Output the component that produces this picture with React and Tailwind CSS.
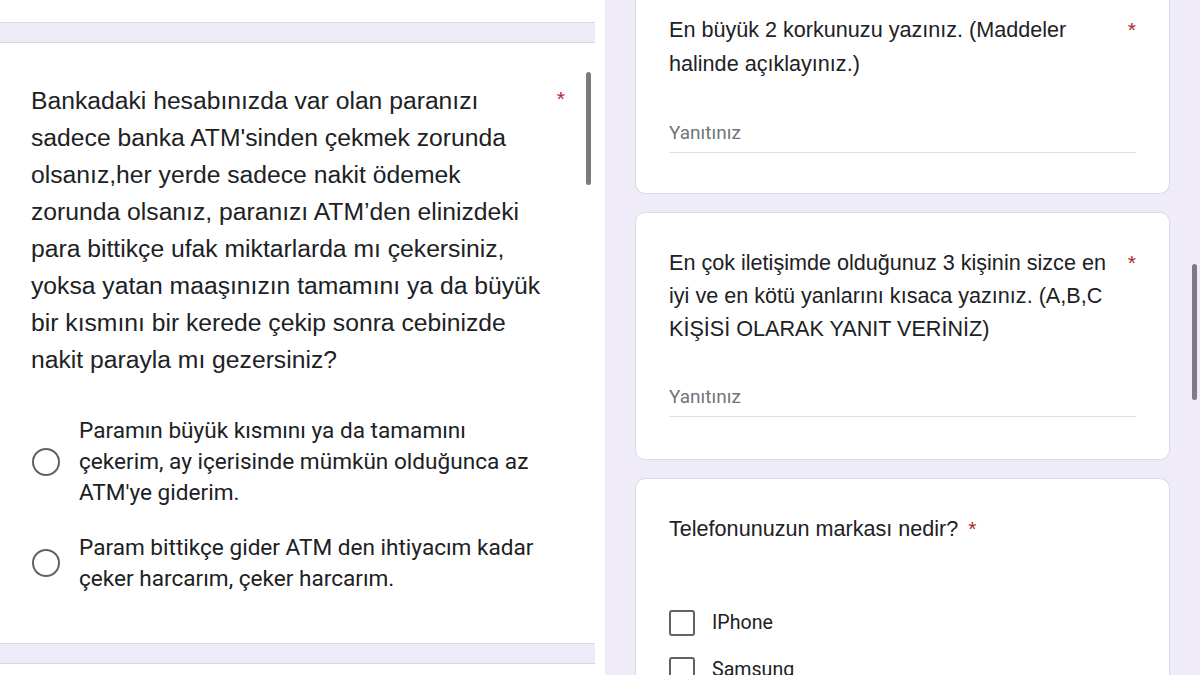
import React from "react";

const Q = "font-['Liberation_Sans',Arial,sans-serif]";
const R = "font-['Roboto','Liberation_Sans',sans-serif]";

function Star({ className = "" }) {
  return (
    <span className={`text-[#b3261e] text-[21px] leading-none ${Q} ${className}`}>*</span>
  );
}

function Radio() {
  return <div className="w-[28px] h-[28px] rounded-full border-[2.5px] border-[#5f6368] shrink-0" />;
}

function Checkbox() {
  return <div className="w-[26px] h-[26px] rounded-[3px] border-[2.5px] border-[#5f6368] shrink-0" />;
}

function LeftPanel() {
  const lines = [
    "Bankadaki hesabınızda var olan paranızı",
    "sadece banka ATM'sinden çekmek zorunda",
    "olsanız,her yerde sadece nakit ödemek",
    "zorunda olsanız, paranızı ATM’den elinizdeki",
    "para bittikçe ufak miktarlarda mı çekersiniz,",
    "yoksa yatan maaşınızın tamamını ya da büyük",
    "bir kısmını bir kerede çekip sonra cebinizde",
    "nakit parayla mı gezersiniz?",
  ];
  return (
    <div className="w-[605px] h-full bg-white relative overflow-hidden shrink-0">
      <div className="h-[22px] bg-white" />
      <div className="h-[21px] w-[595px] bg-[#efebf8] border-y border-[#d9d7de]" />
      <div className="h-[600px] w-[595px] bg-white pl-[31px] pr-[30px] pt-[39px] text-[#202124]">
        <div className="flex justify-between">
          <div className={`${Q} text-[24.7px] leading-[37px] whitespace-nowrap`}>
            {lines.map((l, i) => (
              <div key={i}>{l}</div>
            ))}
          </div>
          <Star className="mt-[6px]" />
        </div>
        <div className={`${R} text-[22.6px] leading-[31px] mt-[37px] flex flex-col gap-[24px]`}>
          <div className="flex items-center gap-[19px] pl-[1px]">
            <Radio />
            <div className="whitespace-nowrap">
              <div>Paramın büyük kısmını ya da tamamını</div>
              <div>çekerim, ay içerisinde mümkün olduğunca az</div>
              <div>ATM'ye giderim.</div>
            </div>
          </div>
          <div className="flex items-center gap-[19px] pl-[1px]">
            <Radio />
            <div className="whitespace-nowrap">
              <div>Param bittikçe gider ATM den ihtiyacım kadar</div>
              <div>çeker harcarım, çeker harcarım.</div>
            </div>
          </div>
        </div>
      </div>
      <div className="h-[21px] w-[595px] bg-[#efebf8] border-y border-[#d9d7de]" />
      <div className="absolute left-[586px] top-[72px] w-[5px] h-[113px] rounded-full bg-[#7b7b7b]" />
    </div>
  );
}

function Answer({ mt }) {
  return (
    <div className={`${R} ${mt} text-[19px] leading-[24px] text-[#70757a] pb-[7px] border-b border-[#e0e0e0] mr-[33px]`}>
      Yanıtınız
    </div>
  );
}

function RightPanel() {
  return (
    <div className="flex-1 h-full bg-[#efebf8] relative overflow-hidden">
      <div className="ml-[30px] w-[535px] flex flex-col gap-[18px] text-[#202124]">
        <div className="h-[194px] bg-white rounded-b-[10px] border-x border-b border-[#dcdae2] pl-[33px] pt-[13px]">
          <div className="flex justify-between pr-[33px]">
            <div className={`${Q} text-[21.6px] leading-[34px] whitespace-nowrap`}>
              <div>En büyük 2 korkunuzu yazınız. (Maddeler</div>
              <div>halinde açıklayınız.)</div>
            </div>
            <Star className="mt-[6px]" />
          </div>
          <Answer mt="mt-[40px]" />
        </div>
        <div className="h-[248px] bg-white rounded-[10px] border border-[#dcdae2] pl-[33px] pt-[33px]">
          <div className="flex justify-between pr-[33px]">
            <div className={`${Q} text-[21.6px] leading-[33px] whitespace-nowrap`}>
              <div>En çok iletişimde olduğunuz 3 kişinin sizce en</div>
              <div>iyi ve en kötü yanlarını kısaca yazınız. (A,B,C</div>
              <div>KİŞİSİ OLARAK YANIT VERİNİZ)</div>
            </div>
            <Star className="mt-[6px]" />
          </div>
          <Answer mt="mt-[40px]" />
        </div>
        <div className="h-[260px] bg-white rounded-t-[10px] border-x border-t border-[#dcdae2] pl-[33px] pt-[33px]">
          <div className={`${Q} text-[21.6px] leading-[33px] whitespace-nowrap flex items-start`}>
            <span>Telefonunuzun markası nedir?</span>
            <Star className="ml-[10px] mt-[6px]" />
          </div>
          <div className={`${R} text-[19.6px] mt-[63px] flex flex-col gap-[18px]`}>
            <div className="flex items-center gap-[17px]">
              <Checkbox />
              <span>IPhone</span>
            </div>
            <div className="flex items-center gap-[17px]">
              <Checkbox />
              <span>Samsung</span>
            </div>
          </div>
        </div>
      </div>
      <div className="absolute left-[587px] top-[264px] w-[5px] h-[136px] rounded-full bg-[#7d7a86]" />
    </div>
  );
}

export default function App() {
  return (
    <div className="w-[1200px] h-[675px] flex overflow-hidden bg-white">
      <LeftPanel />
      <RightPanel />
    </div>
  );
}
